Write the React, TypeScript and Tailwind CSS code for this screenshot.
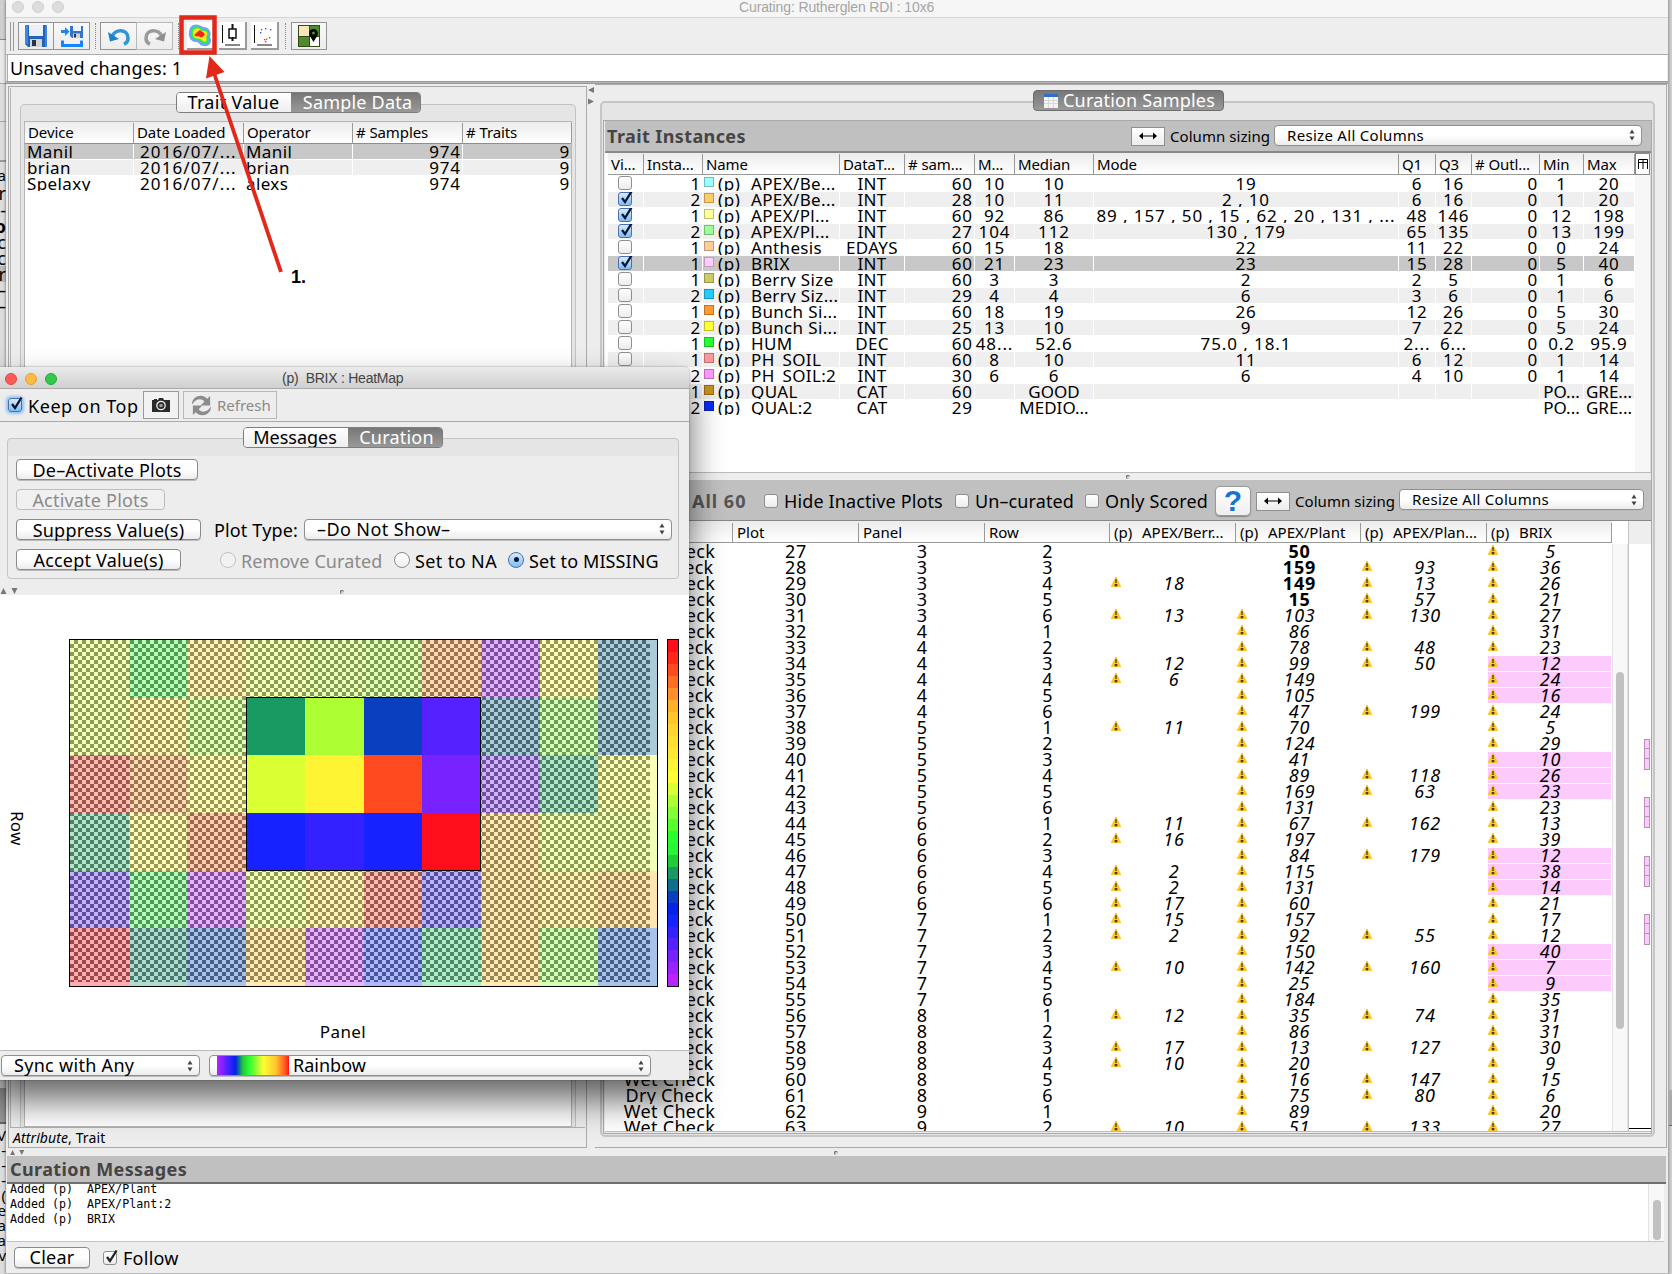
import React from "react";
import { clsx } from "clsx";

/* ---------- small controls ---------- */

function Check({ on, muted, glow }: { on?: boolean; muted?: boolean; glow?: boolean }) {
  return (
    <span
      className={clsx(
        "relative block h-[14px] w-[14px] shrink-0 rounded-[3px] border",
        on && !muted ? "border-[#4a6fae] bg-gradient-to-b from-[#d8ebfb] to-[#7fbdf2]" : "border-[#8f8f8f] bg-gradient-to-b from-white to-[#ececec]",
        glow && "shadow-[0_0_3px_2px_#8fc1ee]"
      )}
    >
      {on && (
        <svg viewBox="0 0 16 16" className="absolute -top-[3px] left-0 h-4 w-4" fill="none" stroke={muted ? "#222" : "#0a1430"} strokeWidth="2.3">
          <path d="M3 8 L6 12 L12.5 1.5" />
        </svg>
      )}
    </span>
  );
}

function Radio({ on, disabled }: { on?: boolean; disabled?: boolean }) {
  return (
    <span
      className={clsx(
        "flex h-4 w-4 shrink-0 items-center justify-center rounded-full border",
        disabled ? "border-[#c0c0c0] bg-[#f2f2f2]" : on ? "border-[#4a6fae] bg-gradient-to-b from-[#d8ebfb] to-[#7fbdf2]" : "border-[#8a8a8a] bg-gradient-to-b from-white to-[#f0f0f0]"
      )}
    >
      {on && <span className="h-[5px] w-[5px] rounded-full bg-[#0a1430]" />}
    </span>
  );
}

function Stepper() {
  return (
    <svg viewBox="0 0 6 12" className="h-3 w-[6px] shrink-0" fill="#444">
      <path d="M3 0.5 L5.5 4.5 H0.5Z M3 11.5 L5.5 7.5 H0.5Z" />
    </svg>
  );
}

function Select({ className, children }: { className: string; children: React.ReactNode }) {
  return (
    <div className={clsx("flex h-[21px] shrink-0 items-center justify-between rounded-[4px] border border-[#8f8f8f] bg-gradient-to-b from-white from-50% to-[#ececec] pr-[6px] leading-[19px] shadow-[0_1px_0_#bbb]", className)}>
      {children}
      <Stepper />
    </div>
  );
}

function Btn({ className, disabled, children }: { className: string; disabled?: boolean; children: React.ReactNode }) {
  return (
    <div
      className={clsx(
        "flex h-[21px] shrink-0 items-center justify-center rounded-[4px] border whitespace-nowrap",
        disabled ? "border-[#bdbdbd] bg-[#f0f0f0] text-[#8a8a8a]" : "border-[#8a8a8a] bg-gradient-to-b from-white from-50% to-[#ececec] shadow-[0_1px_0_#bbb]",
        className
      )}
    >
      {children}
    </div>
  );
}

function ResizeButton({ className }: { className: string }) {
  return (
    <div className={clsx("flex h-[19px] w-[34px] shrink-0 items-center justify-center border border-[#909090] bg-gradient-to-b from-white to-[#ededed]", className)}>
      <svg viewBox="0 0 18 8" className="h-2 w-[18px]" fill="#000">
        <path d="M0 4 L4 0.5 V3.4 H14 V0.5 L18 4 L14 7.5 V4.6 H4 V7.5Z" />
      </svg>
    </div>
  );
}

function Dimple({ className }: { className?: string }) {
  return <span className={clsx("block h-1 w-1 rounded-full border-t border-l border-[#666] bg-[#d8d8d8]", className)} />;
}

function Warn() {
  return (
    <svg viewBox="0 0 10 10" className="h-[10px] w-[10px] shrink-0">
      <path d="M4 0 H6 V1.5 L7 3 L10 9 V10 H0 V9 L3 3 L4 1.500Z" fill="#fdc52e" />
      <path d="M4.500 2h1v4h-1z M4.500 7h1v2.500h-1z M3.500 7.500h3v1h-3z" fill="#111" />
    </svg>
  );
}

/* ---------- toolbar ---------- */

function ToolButton({ className, children }: { className?: string; children: React.ReactNode }) {
  return <div className={clsx("flex h-[28px] items-center justify-center border border-[#939393] bg-gradient-to-b from-[#f8f8f8] to-[#ededed]", className)}>{children}</div>;
}

function FlatTool({ className, children }: { className?: string; children: React.ReactNode }) {
  return <div className={clsx("flex h-[28px] w-[28px] items-center justify-center border-r-2 border-b-2 border-[#9a9a9a] bg-white", className)}>{children}</div>;
}

const Dots = ({ className }: { className: string }) => <div className={clsx("h-[26px] w-0 border-l border-dotted border-[#888]", className)} />;

function Toolbar() {
  return (
    <div className="flex h-[37px] shrink-0 items-center border-b border-[#aaa] bg-[#eeeeee] pl-[4px]">
      <div className="h-[29px] w-[4px] border-x border-[#999]" />
      <ToolButton className="ml-[4px] w-[36px]">
        <svg viewBox="0 0 24 24" className="h-6 w-6">
          <path d="M1 1 H23 V23 H4 L1 20Z" fill="#2461b8" />
          <path d="M1 1 H4 V20 H1Z M21 1 H23 V23 H21Z" fill="#3f86dd" />
          <rect x="5" y="1" width="14" height="11" fill="#e9f0f8" />
          <rect x="6" y="15" width="12" height="8" fill="#d4d4d4" />
          <rect x="8" y="16" width="4" height="6" fill="#26344c" />
        </svg>
      </ToolButton>
      <ToolButton className="-ml-px w-[37px]">
        <svg viewBox="0 0 24 24" className="h-6 w-6">
          <path d="M10 2 H23 V14 H12 L10 12Z" fill="#3176c8" />
          <rect x="13" y="2" width="8" height="5" fill="#eef3fa" />
          <rect x="13" y="9.500" width="7" height="4.500" fill="#d4d4d4" />
          <rect x="14" y="10" width="2" height="3.500" fill="#26344c" />
          <path d="M1 6 H5 V3 L9.500 7.500 L5 12 V9 H1Z" fill="#1c86f2" />
          <path d="M1 16.500 H4 V20 H20 V16.500 H23 V23 H1Z" fill="#1485ff" />
        </svg>
      </ToolButton>
      <Dots className="ml-[5px]" />
      <ToolButton className="ml-[4px] w-[37px]">
        <svg viewBox="0 0 24 24" className="h-6 w-6" fill="none">
          <path d="M5 13 C8 4 21 5 21 14 C21 17 19.500 19 17 20" stroke="#2e96d8" strokeWidth="3.600" />
          <path d="M1 8 L3 17.500 L12 15Z" fill="#1d7fc6" />
        </svg>
      </ToolButton>
      <ToolButton className="-ml-px w-[37px] border-[#b8b8b8]">
        <svg viewBox="0 0 24 24" className="h-6 w-6" fill="none">
          <path d="M19 13 C16 4 3 5 3 14 C3 17 4.500 19 7 20" stroke="#9b9b9b" strokeWidth="3.600" />
          <path d="M23 8 L21 17.500 L12 15Z" fill="#8e8e8e" />
        </svg>
      </ToolButton>
      <Dots className="ml-[5px]" />
      <FlatTool className="ml-[8px]">
        <svg viewBox="0 0 24 24" className="h-6 w-6">
          <defs>
            <filter id="soft" x="-20%" y="-20%" width="140%" height="140%">
              <feGaussianBlur stdDeviation="0.6" />
            </filter>
          </defs>
          <g filter="url(#soft)">
            <path d="M2 5 C5 0 11 1 15 4 C21 4 24 9 22 14 C25 19 21 24 16 23 C11 23 12 19 8 19 C2 19 -1 12 2 5Z" fill="#6aa4ff" />
            <path d="M4 6 C7 2 11 3 14 6 C20 6 22 10 20 14 C22 19 19 22 16 21 C13 20 12 17 9 17 C3 17 2 11 4 6Z" fill="#29e85a" />
            <path d="M5.500 7.500 C8 4 12 5 13.500 8 C19 7 21 11 18 14 C20 18 17 20 15 18 C13 16 11 15.500 9 15.500 C5 15 4 11 5.500 7.500Z" fill="#fbe71e" />
            <path d="M6.500 12 C8 10 10 8 12 7 C14 9 17 9.500 16.500 12 C15 13 14.500 15 12 14 C10 12.500 7 14.500 6.500 12Z" fill="#f5231c" />
          </g>
        </svg>
      </FlatTool>
      <FlatTool className="ml-[4px]">
        <svg viewBox="0 0 24 24" className="h-6 w-6" fill="none" stroke="#111" strokeWidth="1.500">
          <path d="M2.500 2 V20 M5 22 H20" strokeWidth="1" />
          <path d="M12.500 1 V6 M12.500 14 V18" strokeWidth="2" />
          <rect x="9" y="6" width="7" height="9" />
        </svg>
      </FlatTool>
      <FlatTool className="ml-[4px]">
        <svg viewBox="0 0 24 24" className="h-6 w-6">
          <path d="M2.500 2 V20 M5 22 H20" stroke="#111" strokeWidth="1" />
          <g fill="#2040ff">
            <rect x="13" y="5" width="1.300" height="1.300" />
            <rect x="8" y="9" width="1.300" height="1.300" />
            <rect x="18" y="6" width="1.300" height="1.300" />
            <rect x="17" y="14" width="1.300" height="1.300" />
          </g>
          <g fill="#f02020">
            <rect x="9" y="6" width="1.300" height="1.300" />
            <rect x="12" y="16" width="1.300" height="1.300" />
            <rect x="13" y="18" width="1.300" height="1.300" />
            <rect x="14" y="15.500" width="1.300" height="1.300" />
          </g>
        </svg>
      </FlatTool>
      <Dots className="ml-[6px]" />
      <ToolButton className="ml-[5px] w-[36px]">
        <svg viewBox="0 0 22 22" className="h-[22px] w-[22px]">
          <rect width="22" height="22" fill="#2f4a17" />
          <rect x="1" y="1" width="10" height="10" fill="#f8e6b8" />
          <rect x="12" y="1" width="9" height="10" fill="#4f8a2b" />
          <rect x="1" y="12" width="10" height="9" fill="#4f8a2b" />
          <rect x="12" y="12" width="9" height="9" fill="#fff" />
          <path d="M15.500 4 C20 4 21 9 18.500 12 L15.500 17 L12.500 12 C10 9 11 4 15.500 4Z" fill="#000" />
          <circle cx="15.500" cy="8" r="1.600" fill="#4f8a2b" />
        </svg>
      </ToolButton>
    </div>
  );
}

/* ---------- left panel ---------- */

const devices = [
  ["Manil", "2016/07/...", "Manil", "974", "9"],
  ["brian", "2016/07/...", "brian", "974", "9"],
  ["Spelaxy", "2016/07/...", "alexs", "974", "9"],
];

function LeftPanel() {
  return (
    <div className="flex h-[1062px] w-[579px] shrink-0 flex-col border border-[#a9a9a9] p-px">
      <div className="flex min-h-0 flex-1 flex-col border-l border-[#b5b5b5] pt-[4px]">
        <div className="z-10 ml-[165px] flex h-[21px] w-[245px] shrink-0 overflow-hidden rounded-[4px] border border-[#7d7d7d] text-[18px] leading-[19px]">
          <div className="w-[114px] bg-gradient-to-b from-white to-[#eee] pr-px text-center tracking-[0.3px]">Trait Value</div>
          <div className="flex-1 bg-gradient-to-b from-[#777] to-[#999] pl-[4px] text-center tracking-[0.2px] text-white">Sample Data</div>
        </div>
        <div className="-mt-[9px] mr-[9px] ml-[9px] flex-1 rounded-t-[5px] border border-b-0 border-[#c2c2c2] bg-[#e5e5e5] px-[3px] pt-[16px]">
          <div className="h-full border border-[#b5b5b5] bg-white">
            <div className="grid h-[22px] grid-cols-[109px_110px_109px_110px_109px] border-b border-[#8e8e8e] bg-gradient-to-b from-[#ececec] to-white pt-px text-[15px] leading-[19px] tracking-[-0.1px]">
              {["Device", "Date Loaded", "Operator", "# Samples", "# Traits"].map((h) => (
                <div key={h} className="overflow-hidden border-r border-[#999] pl-[3px] whitespace-nowrap">{h}</div>
              ))}
            </div>
            {devices.map((d, i) => (
              <div key={d[0]} className="grid h-4 grid-cols-[109px_110px_109px_110px_109px] text-[17px] leading-[15px] tracking-[0.4px]">
                {d.map((c, j) => (
                  <div
                    key={j}
                    className={clsx(
                      "mr-px h-[15px] overflow-hidden whitespace-nowrap",
                      i === 0 ? "bg-[#c8c8c8]" : i === 1 ? "bg-[#efefef]" : "bg-white",
                      j >= 3 ? "pr-px text-right tracking-[0.9px]" : j === 1 ? "pl-[6px] tracking-[1.1px]" : "pl-[2px]"
                    )}
                  >
                    {c}
                  </div>
                ))}
              </div>
            ))}
          </div>
        </div>
      </div>
      <div className="h-px shrink-0 bg-[#b0b0b0]" />
      <div className="flex h-[18px] shrink-0 items-center pl-[3px] text-[14px] tracking-[0.1px]">
        <i>Attribute</i>, Trait
      </div>
    </div>
  );
}

/* ---------- trait instances ---------- */

const traits = [
  ["", "1", "#99ffff", "APEX/Be...", "INT", "60", "10", "10", "19", "6", "16", "0", "1", "20"],
  ["x", "2", "#ffcc66", "APEX/Be...", "INT", "28", "10", "11", "2 , 10", "6", "16", "0", "1", "20"],
  ["x", "1", "#ffff99", "APEX/Pl...", "INT", "60", "92", "86", "89 , 157 , 50 , 15 , 62 , 20 , 131 , ...", "48", "146", "0", "12", "198"],
  ["x", "2", "#99ff99", "APEX/Pl...", "INT", "27", "104", "112", "130 , 179", "65", "135", "0", "13", "199"],
  ["", "1", "#ffcc99", "Anthesis", "EDAYS", "60", "15", "18", "22", "11", "22", "0", "0", "24"],
  ["x", "1", "#ffccff", "BRIX", "INT", "60", "21", "23", "23", "15", "28", "0", "5", "40"],
  ["", "1", "#cccc66", "Berry Size", "INT", "60", "3", "3", "2", "2", "5", "0", "1", "6"],
  ["", "2", "#22ccff", "Berry Siz...", "INT", "29", "4", "4", "6", "3", "6", "0", "1", "6"],
  ["", "1", "#ff9933", "Bunch Si...", "INT", "60", "18", "19", "26", "12", "26", "0", "5", "30"],
  ["", "2", "#ffff33", "Bunch Si...", "INT", "25", "13", "10", "9", "7", "22", "0", "5", "24"],
  ["", "1", "#22ff33", "HUM", "DEC", "60", "48...", "52.6", "75.0 , 18.1", "2...", "6...", "0", "0.2", "95.9"],
  ["", "1", "#ff9999", "PH_SOIL", "INT", "60", "8", "10", "11", "6", "12", "0", "1", "14"],
  ["", "2", "#ff99ff", "PH_SOIL:2", "INT", "30", "6", "6", "6", "4", "10", "0", "1", "14"],
  ["", "1", "#c8921e", "QUAL", "CAT", "60", "", "GOOD", "", "", "", "", "PO...", "GRE..."],
  ["", "2", "#0a2cf5", "QUAL:2", "CAT", "29", "", "MEDIO...", "", "", "", "", "PO...", "GRE..."],
];

const traitCols = "grid-cols-[36px_59px_137px_65px_70px_40px_79px_305px_37px_36px_68px_44px_51px]";

function TraitInstances() {
  return (
    <>
      <div className="flex h-[32px] shrink-0 items-center border-b-2 border-[#888] bg-[#c0c0c0] pl-[2px]">
        <div className="w-[524px] text-[18px] font-bold tracking-[0.4px] text-[#444]">Trait Instances</div>
        <ResizeButton className="" />
        <div className="ml-[5px] w-[104px] text-[15px] tracking-[0.05px] whitespace-nowrap">Column sizing</div>
        <Select className="mb-[2px] w-[368px] pl-[12px] text-[15px] tracking-[0.3px]">Resize All Columns</Select>
      </div>
      <div className="flex h-[320px] shrink-0 border-b border-[#bbb] bg-white pl-[3px]">
        <div className="w-[1027px] shrink-0">
          <div className={clsx("mb-px grid h-[22px] border-b border-[#999] bg-gradient-to-b from-[#ececec] to-white pt-px text-[15px] leading-[20px]", traitCols)}>
            {["Vi...", "Insta...", "Name", "DataT...", "# sam...", "M...", "Median", "Mode", "Q1", "Q3", "# Outl...", "Min", "Max"].map((h) => (
              <div key={h} className="overflow-hidden border-r border-[#999] pl-[3px] tracking-[-0.1px] whitespace-nowrap">{h}</div>
            ))}
          </div>
          {traits.map((t, i) => (
            <div key={i} className={clsx("grid h-4 text-[17px] leading-[15px]", traitCols)}>
              {[t[0], t[1], t[2], ...t.slice(4)].map((c, j) => (
                <div
                  key={j}
                  className={clsx(
                    "mr-px flex h-[15px] overflow-hidden whitespace-nowrap",
                    i === 5 ? "bg-[#c8c8c8]" : i % 2 ? "bg-[#efefef]" : "bg-white",
                    j === 1 || j === 4 || j === 10 ? "justify-end pr-px tracking-[0.9px]" : j === 2 ? "pl-px" : "justify-center",
                    j > 4 && i < 13 && "tracking-[0.9px]",
                    j === 3 && "tracking-[0.3px]"
                  )}
                >
                  {j === 0 ? (
                    <span className="-ml-px block h-[14px]"><Check on={c === "x"} /></span>
                  ) : j === 2 ? (
                    <>
                      <span className="mt-px block h-[10px] w-[10px] border border-black/25" style={{ backgroundColor: c }} />
                      <span className="ml-[4px] w-[33px] tracking-[0.6px]">(p)</span>
                      <span className="tracking-[0.35px]">{t[3]}</span>
                    </>
                  ) : (
                    c
                  )}
                </div>
              ))}
            </div>
          ))}
        </div>
        <div className="w-4 border-r border-[#ddd] bg-[#f7f7f7]">
          <div className="flex h-[22px] items-center justify-center border border-[#888] bg-white">
            <svg viewBox="0 0 10 10" className="h-[10px] w-[10px]" fill="none" stroke="#000" strokeWidth="1">
              <path d="M0.500 10 V0.500 H9.500 V10 M5 0.500 V10 M0.500 3.500 H9.500" />
            </svg>
          </div>
        </div>
      </div>
    </>
  );
}

/* ---------- plots table ---------- */

type Plot = [string, number, number, number, string, string, string, string];
const plots: Plot[] = [
  ["W", 27, 3, 2, "", "b50", "", "5"],
  ["D", 28, 3, 3, "", "b159", "93", "36"],
  ["W", 29, 3, 4, "18", "b149", "13", "26"],
  ["W", 30, 3, 5, "", "b15", "57", "21"],
  ["W", 31, 3, 6, "13", "103", "130", "27"],
  ["W", 32, 4, 1, "", "86", "", "31"],
  ["D", 33, 4, 2, "", "78", "48", "23"],
  ["W", 34, 4, 3, "12", "99", "50", "p12"],
  ["W", 35, 4, 4, "6", "149", "", "p24"],
  ["D", 36, 4, 5, "", "105", "", "p16"],
  ["W", 37, 4, 6, "", "47", "199", "24"],
  ["D", 38, 5, 1, "11", "70", "", "5"],
  ["W", 39, 5, 2, "", "124", "", "29"],
  ["W", 40, 5, 3, "", "41", "", "p10"],
  ["W", 41, 5, 4, "", "89", "118", "p26"],
  ["D", 42, 5, 5, "", "169", "63", "p23"],
  ["W", 43, 5, 6, "", "131", "", "23"],
  ["W", 44, 6, 1, "11", "67", "162", "13"],
  ["W", 45, 6, 2, "16", "197", "", "39"],
  ["D", 46, 6, 3, "", "84", "179", "p12"],
  ["D", 47, 6, 4, "2", "115", "", "p38"],
  ["W", 48, 6, 5, "2", "131", "", "p14"],
  ["W", 49, 6, 6, "17", "60", "", "21"],
  ["D", 50, 7, 1, "15", "157", "", "17"],
  ["W", 51, 7, 2, "2", "92", "55", "12"],
  ["D", 52, 7, 3, "", "150", "", "p40"],
  ["W", 53, 7, 4, "10", "142", "160", "p7"],
  ["D", 54, 7, 5, "", "25", "", "p9"],
  ["W", 55, 7, 6, "", "184", "", "35"],
  ["D", 56, 8, 1, "12", "35", "74", "31"],
  ["D", 57, 8, 2, "", "86", "", "31"],
  ["D", 58, 8, 3, "17", "13", "127", "30"],
  ["D", 59, 8, 4, "10", "20", "", "9"],
  ["W", 60, 8, 5, "", "16", "147", "15"],
  ["D", 61, 8, 6, "", "75", "80", "6"],
  ["W", 62, 9, 1, "", "89", "", "20"],
  ["W", 63, 9, 2, "10", "51", "133", "27"],
];

const plotCols = "grid-cols-[126px_126px_126px_125px_126px_125px_126px_125px]";

function ValueCell({ v }: { v: string }) {
  const bold = v.startsWith("b");
  const pink = v.startsWith("p");
  return (
    <div className={clsx("mr-px ml-px flex h-[15px] items-start overflow-hidden", pink && "bg-[#fccbfc]")}>
      {v && (
        <>
          <span className="block w-[10px] pt-px">{!bold && <Warn />}</span>
          <span className={clsx("-ml-[8px] flex-1 text-center tracking-[0.8px]", bold ? "font-bold" : "italic")}>{v.replace(/^[bp]/, "")}</span>
        </>
      )}
    </div>
  );
}

const groups = ["mt-[195px]", "mt-[27px]", "mt-[28px]", "mt-[27px]"];

function PlotsTable() {
  return (
    <>
      <div className="flex h-[41px] shrink-0 items-center border-b border-[#888] bg-[#c0c0c0] pt-[2px] pl-[87px] text-[18px] whitespace-nowrap">
        <div className="w-[72px] font-bold tracking-[1px] text-[#555]">All 60</div>
        <Check />
        <div className="ml-[6px] w-[171px] tracking-[0.12px]">Hide Inactive Plots</div>
        <Check />
        <div className="ml-[6px] w-[110px] tracking-[0.1px]">Un–curated</div>
        <Check />
        <div className="ml-[6px] w-[110px] tracking-[0.15px]">Only Scored</div>
        <div className="flex h-[30px] w-[36px] items-center justify-center rounded-[5px] border border-[#999] bg-gradient-to-b from-white to-[#eee] font-['Liberation_Sans'] text-[30px] leading-none font-bold text-[#1374d6] shadow-[0_1px_1px_#888]">?</div>
        <ResizeButton className="ml-[5px]" />
        <div className="ml-[5px] w-[104px] text-[15px] tracking-[0.05px]">Column sizing</div>
        <Select className="mb-[3px] w-[245px] pl-[12px] text-[15px] tracking-[0.3px]">Resize All Columns</Select>
      </div>
      <div className="flex h-[611px] shrink-0 overflow-hidden border-b border-[#bbb] bg-white pl-[2px]">
        <div className="w-[1005px] shrink-0">
          <div className={clsx("mb-px grid h-[22px] border-b border-[#999] bg-gradient-to-b from-[#ececec] to-white pt-[2px] text-[15px] leading-[19px]", plotCols)}>
            {["Entry Type", "Plot", "Panel", "Row", "APEX/Berr...", "APEX/Plant", "APEX/Plan...", "BRIX"].map((h, i) => (
              <div key={h} className="flex overflow-hidden border-r border-[#999] pl-[4px] whitespace-nowrap">
                {i > 3 && <span className="w-[28px] shrink-0">(p)</span>}
                {h}
              </div>
            ))}
          </div>
          {plots.map((p) => (
            <div key={p[1]} className={clsx("grid h-4 overflow-hidden text-[18px] leading-[15px]", plotCols)}>
              <div className="pr-px text-center tracking-[0.3px]">{p[0] === "W" ? "Wet Check" : "Dry Check"}</div>
              <div className="text-center tracking-[0.7px]">{p[1]}</div>
              <div className="text-center">{p[2]}</div>
              <div className="text-center">{p[3]}</div>
              <ValueCell v={p[4]} />
              <ValueCell v={p[5]} />
              <ValueCell v={p[6]} />
              <ValueCell v={p[7]} />
            </div>
          ))}
        </div>
        <div className="mt-[23px] flex w-[16px] shrink-0 flex-col items-center border-x border-[#e2e2e2] bg-[#f8f8f8] pt-[128px]">
          <div className="h-[357px] w-[8px] rounded-full bg-[#c1c1c1]" />
        </div>
        <div className="flex w-[25px] shrink-0 flex-col border-l border-[#c5c5c5]">
          <div className="h-[23px] shrink-0 bg-[#eeeeee]" />
          <div className="flex h-[585px] shrink-0 flex-col items-end border-b border-black pr-[3px]">
            {groups.map((g, i) => (
              <div key={i} className={clsx("flex w-[6px] flex-col border border-[#b78fb7]", g)}>
                <div className="h-[9px] border-b border-[#b78fb7] bg-[#fccbfc]" />
                <div className="h-[10px] border-b border-[#b78fb7] bg-[#fccbfc]" />
                <div className="h-[10px] bg-[#fccbfc]" />
              </div>
            ))}
          </div>
        </div>
      </div>
    </>
  );
}

function RightPanel() {
  return (
    <div className="flex h-[1064px] w-[1072px] shrink-0 flex-col border-t border-r border-b border-[#a9a9a9] pt-[5px]">
      <div className="z-10 ml-[438px] flex h-[21px] w-[191px] shrink-0 items-center rounded-[4px] border border-[#6d6d6d] bg-gradient-to-b from-[#777] to-[#999] pl-[10px] text-[18px] tracking-[0.2px] whitespace-nowrap text-white">
        <svg viewBox="0 0 14 14" className="mr-[5px] h-[14px] w-[14px] shrink-0">
          <rect width="14" height="14" fill="#f3f3f3" />
          <rect width="14" height="3" fill="#2c6fc4" />
          <path d="M0 6.500H14M0 9.500H14M4.500 3V14M9.500 3V14" stroke="#d8d8d8" />
        </svg>
        Curation Samples
      </div>
      <div className="-mt-[10px] ml-[5px] h-[1036px] w-[1055px] rounded-[5px] border-2 border-[#c6c6c6] bg-[#e5e5e5] px-px pt-[17px]">
        <div className="flex h-[1014px] flex-col border border-[#a9a9a9] bg-[#eee] pl-px">
          <TraitInstances />
          <div className="flex h-[7px] shrink-0 items-center justify-center"><Dimple /></div>
          <PlotsTable />
        </div>
      </div>
    </div>
  );
}

/* ---------- heat map window ---------- */

const heat = [
  ["#daff33", "#2aff2e", "#ffde30", "#daff33", "#c0ff33", "#adff33", "#ff8f28", "#aa22ff", "#fff433", "#0f6e90"],
  ["#daff33", "#ffe832", "#adff33", "#189a62", "#adff33", "#0a3fc0", "#5522ff", "#0f6e90", "#80ff33", "#0f6e90"],
  ["#ff3a1f", "#ff8f28", "#fff433", "#daff33", "#fff433", "#ff4a1f", "#7722ff", "#7722ff", "#20b868", "#edff33"],
  ["#20b868", "#fff433", "#ff6e22", "#1622ff", "#3322ff", "#1622ff", "#ff0d1a", "#ffc42e", "#daff33", "#daff33"],
  ["#5522ff", "#28f538", "#bb22ff", "#daff33", "#ffde30", "#ff3a1f", "#3322ff", "#ffc42e", "#ffde30", "#ffb82b"],
  ["#ff0d1a", "#189a78", "#0a4fc0", "#ffc42e", "#bb22ff", "#1633ff", "#20c868", "#ffc42e", "#80ff33", "#0a4fc0"],
];

const scale = [
  "#ff0d1a", "#ff261a", "#ff4a1f", "#ff6e22", "#ff8f28", "#ffb02b", "#ffc42e", "#ffd42f", "#ffde30", "#ffe832",
  "#fff433", "#fdff33", "#daff33", "#adff33", "#80ff33", "#55ff2e", "#2aff2e", "#28f538", "#20cc38", "#189a62",
  "#0f6e90", "#0a3fc0", "#0522e8", "#1622ff", "#3322ff", "#5522ff", "#7722ff", "#9a22ff", "#bb22ff",
];

function HeatMap() {
  return (
    <div className="flex h-[455px] shrink-0 flex-col bg-white pt-[44px]">
      <div className="flex h-[348px]">
        <div className="flex w-[69px] items-center pl-[7px]">
          <span className="mt-[30px] text-[17px] leading-[20px] tracking-[0.2px] [writing-mode:vertical-rl]">Row</span>
        </div>
        <div className="relative h-[348px] w-[589px] border border-black bg-white">
          <div className="h-[342px] w-[580px] bg-[repeating-conic-gradient(#666666_0_25%,#ffffff_0_50%)] bg-[length:8px_8px]" />
          <div className="absolute inset-0 grid grid-cols-10 grid-rows-6">
            {heat.flatMap((r, y) =>
              r.map((c, x) => (
                <div key={`${x}-${y}`} className={y > 0 && y < 4 && x > 2 && x < 7 ? "" : "opacity-35"} style={{ backgroundColor: c }} />
              ))
            )}
          </div>
          <div className="absolute top-[57px] left-[176px] h-[174px] w-[235px] border border-black" />
        </div>
        <div className="ml-[9px] flex w-[12px] flex-col border border-black">
          {scale.map((c) => (
            <div key={c} className="flex-1" style={{ backgroundColor: c }} />
          ))}
        </div>
      </div>
      <div className="mt-[32px] pr-[3px] text-center text-[17px] leading-[26px] tracking-[0.4px]">Panel</div>
    </div>
  );
}

function HeatMapWindow() {
  return (
    <div className="absolute top-[367px] left-[-6px] z-20 flex h-[713px] w-[695px] flex-col overflow-visible rounded-t-[5px] bg-[#ededed] pl-[6px] shadow-[0_20px_34px_rgba(0,0,0,0.6),0_0_2px_rgba(0,0,0,0.45)]">
      <div className="-ml-[6px] flex h-[22px] shrink-0 items-center rounded-t-[5px] border-b border-[#aaa] bg-gradient-to-b from-[#ebebeb] to-[#d0d0d0] pt-[2px] pl-[11px]">
        <span className="h-3 w-3 rounded-full border border-[#df4744] bg-[#fc5b57]" />
        <span className="ml-2 h-3 w-3 rounded-full border border-[#dea034] bg-[#fdbc40]" />
        <span className="ml-2 h-3 w-3 rounded-full border border-[#27aa35] bg-[#34c84a]" />
        <span className="ml-[225px] font-['Liberation_Sans'] text-[14px] tracking-[-0.25px] whitespace-pre text-[#444]">(p)  BRIX : HeatMap</span>
      </div>
      <div className="flex h-[33px] shrink-0 items-center border-b border-[#aaa] pl-[8px]">
        <Check on glow />
        <span className="mt-[2px] ml-[6px] w-[115px] text-[18px] tracking-[0.55px] whitespace-nowrap">Keep on Top</span>
        <div className="flex h-[28px] w-[36px] items-center justify-center border border-[#999] bg-[#f2f2f2]">
          <svg viewBox="0 0 18 14" className="h-[14px] w-[18px]">
            <path d="M0 2 H2 V1 H5 V2 H6 L7 0 H11 L12 2 H18 V14 H0Z" fill="#2b2b2b" />
            <circle cx="9" cy="7.500" r="4.200" fill="none" stroke="#eee" strokeWidth="1.300" />
            <circle cx="9" cy="7.500" r="1.800" fill="#999" />
          </svg>
        </div>
        <div className="ml-[4px] flex h-[28px] w-[94px] items-center border border-[#b8b8b8] pl-[6px] text-[15px] text-[#8a8a8a]">
          <svg viewBox="0 0 24 24" className="mr-[4px] h-[23px] w-[23px] shrink-0" fill="#8c8c8c">
            <path d="M2 11 C2 2 13 -1 18 5 L21 2 V12 H11 L15 8 C12 4 6 5 2 11Z" />
            <path d="M22 13 C22 22 11 25 6 19 L3 22 V12 H13 L9 16 C12 20 18 19 22 13Z" />
          </svg>
          Refresh
        </div>
      </div>
      <div className="z-10 mt-[5px] ml-[243px] flex h-[21px] w-[200px] shrink-0 overflow-hidden rounded-[4px] border border-[#7d7d7d] text-[18px] leading-[19px]">
        <div className="w-[104px] bg-gradient-to-b from-white to-[#eee] pr-[2px] text-center">Messages</div>
        <div className="flex-1 bg-gradient-to-b from-[#777] to-[#999] pl-[3px] text-center tracking-[0.2px] text-white">Curation</div>
      </div>
      <div className="-mt-[10px] ml-[7px] h-[141px] w-[672px] shrink-0 rounded-[4px] border border-[#c4c4c4] bg-[linear-gradient(#e5e5e5_17px,#ededed_17px)] pt-[20px] pl-[8px] text-[18px] leading-[20px] tracking-[0.2px] whitespace-nowrap">
        <Btn className="w-[182px]">De–Activate Plots</Btn>
        <Btn className="mt-[9px] w-[149px]" disabled>Activate Plots</Btn>
        <div className="mt-[9px] flex h-[21px] items-center">
          <Btn className="w-[185px]">Suppress Value(s)</Btn>
          <span className="ml-[13px] w-[90px] tracking-[0.15px]">Plot Type:</span>
          <Select className="mb-px w-[368px] pl-[12px] tracking-[0.4px]">–Do Not Show–</Select>
        </div>
        <div className="mt-[9px] flex h-[21px] items-center tracking-[0.1px]">
          <Btn className="w-[165px] tracking-[0.2px]">Accept Value(s)</Btn>
          <span className="w-[39px]" />
          <Radio disabled />
          <span className="mt-[2px] ml-[5px] w-[153px] text-[#8a8a8a]">Remove Curated</span>
          <Radio />
          <span className="mt-[2px] ml-[5px] w-[93px] tracking-[0.4px]">Set to NA</span>
          <Radio on />
          <span className="mt-[2px] ml-[5px]">Set to MISSING</span>
        </div>
      </div>
      <div className="flex h-[16px] shrink-0 items-end pb-px text-[#777]">
        <svg viewBox="0 0 20 6" className="h-[6px] w-5 shrink-0" fill="#777"><path d="M3.500 0 L6.500 6 H0.500Z M14.500 6 L17.500 0 H11.500Z" /></svg>
        <Dimple className="ml-[320px]" />
      </div>
      <HeatMap />
      <div className="flex flex-1 items-center border-t border-[#bbb] pl-px text-[18px]">
        <Select className="w-[199px] pl-[12px] tracking-[0.3px]">Sync with Any</Select>
        <Select className="ml-[9px] w-[442px] pl-[7px]">
          <span className="mr-[4px] block h-[19px] w-[72px] bg-[linear-gradient(90deg,#bb22ff,#3322ff_18%,#0522e8_26%,#20cc38_36%,#33ff33_46%,#fdff33_64%,#ffc42e_82%,#ff4a1f_96%,#ff0d1a)]" />
          <span className="flex-1">Rainbow</span>
        </Select>
      </div>
    </div>
  );
}

/* ---------- page ---------- */

function BehindLeft() {
  return (
    <div className="flex h-full w-[6px] shrink-0 flex-col items-end overflow-hidden bg-[#dcdcdc] text-[18px] leading-4 text-black">
      <div className="h-[40px] w-full border-b border-[#888] bg-[#cfcfcf]" />
      <div className="h-[44px] w-full border-b border-[#aaa] bg-[#e8e8e8]" />
      <div className="h-[38px] w-full border-b border-[#aaa]" />
      <div className="h-[40px] w-full border-b-2 border-[#999]" />
      <div className="mt-[5px] h-[18px] text-[15px]">a</div>
      <div>r</div>
      <div className="mt-px">-</div>
      <div className="font-bold">o</div>
      <div>c</div>
      <div>c</div>
      <div className="flex w-full justify-end bg-[#bbb]">r</div>
      <div>–</div>
      <div>–</div>
      <div className="mt-[774px] h-[36px] w-full border-b-2 border-[#666] bg-[#999]" />
      <div className="flex flex-col items-end pt-1 text-[15px] leading-[15px]">
        <span>V</span>
        <span>-</span>
        <span>-</span>
        <span>-</span>
        <span>(</span>
        <span>e</span>
        <span>ta</span>
        <span>ca</span>
        <span>-v</span>
      </div>
    </div>
  );
}

export default function App() {
  return (
    <div className="relative flex h-[1274px] w-[1672px] overflow-hidden bg-[#d0d0d0] font-['Noto_Sans',sans-serif] text-black">
      <BehindLeft />
      <div className="flex w-[1662px] shrink-0 flex-col bg-[#ededed] shadow-[0_0_3px_rgba(0,0,0,0.6)]">
        <div className="flex h-[18px] shrink-0 items-center border-b border-[#d5d5d5] bg-[#f6f6f6] pl-[6px]">
          <span className="mb-[3px] h-3 w-3 rounded-full border border-[#d0d0d0] bg-[#dddddd]" />
          <span className="mb-[3px] ml-2 h-3 w-3 rounded-full border border-[#d0d0d0] bg-[#dddddd]" />
          <span className="mb-[3px] ml-2 h-3 w-3 rounded-full border border-[#d0d0d0] bg-[#dddddd]" />
          <span className="mb-[2px] ml-[675px] font-['Liberation_Sans'] text-[14px] tracking-[-0.13px] whitespace-nowrap text-[#a5a5a5]">Curating: Rutherglen RDI : 10x6</span>
        </div>
        <Toolbar />
        <div className="mx-px flex h-[26px] shrink-0 items-center border-l border-[#aaa] bg-white pl-[2px] text-[18px] tracking-[0.2px]">Unsaved changes: 1</div>
        <div className="h-[3px] shrink-0 border-y border-[#999] bg-[#b5b5b5]" />
        <div className="flex h-[1065px] shrink-0 pl-[2px]">
          <div className="pt-[2px]"><LeftPanel /></div>
          <div className="flex w-[8px] shrink-0 flex-col items-center pt-[3px]">
            <svg viewBox="0 0 6 18" className="h-[18px] w-[6px]" fill="#777"><path d="M6 0 V6 L0 3Z M0 11.500 V17.500 L6 14.500Z" /></svg>
          </div>
          <RightPanel />
        </div>
        <div className="flex h-[7px] shrink-0 items-center pl-[2px]">
          <svg viewBox="0 0 20 6" className="h-[5px] w-5 shrink-0" fill="#777"><path d="M3.500 0 L6.500 6 H0.500Z M14.500 6 L17.500 0 H11.500Z" /></svg>
          <Dimple className="ml-[806px]" />
        </div>
        <div className="mr-[2px] ml-px flex h-[28px] shrink-0 items-center border-b-2 border-[#6e6e6e] bg-[#c0c0c0] pl-[3px] text-[18px] font-bold tracking-[0.4px] text-[#444]">Curation Messages</div>
        <div className="mr-[4px] ml-px flex h-[58px] shrink-0 justify-between overflow-hidden border-b border-[#c4c4c4] bg-white">
          <pre className="-mt-[2px] pl-[3px] font-['DejaVu_Sans_Mono'] text-[11.650px] leading-[15px]">{"Added (p)  APEX/Plant\nAdded (p)  APEX/Plant:2\nAdded (p)  BRIX"}</pre>
          <div className="flex w-[16px] justify-center border-l border-[#e2e2e2] bg-[#f8f8f8] pt-[16px]">
            <div className="h-[40px] w-[8px] rounded-full bg-[#c1c1c1]" />
          </div>
        </div>
        <div className="flex flex-1 items-center border-b border-[#bbb] pl-[8px] text-[18px] tracking-[0.25px]">
          <Btn className="w-[76px]">Clear</Btn>
          <span className="w-[13px]" />
          <Check on muted />
          <span className="mt-[2px] ml-[6px]">Follow</span>
        </div>
      </div>
      <div className="flex w-[4px] flex-col overflow-hidden border-l border-[#a8a8a8]">
        <div className="mt-[1090px] h-[36px] border-b border-[#666] bg-[#aaa]" />
      </div>

      <HeatMapWindow />

      <svg className="pointer-events-none absolute top-0 left-0 z-30 h-[300px] w-[340px]" viewBox="0 0 340 300">
        <rect x="181.500" y="17.500" width="33" height="35" fill="none" stroke="#e1281a" strokeWidth="4.500" />
        <path d="M281 272 L213 70" stroke="#e1281a" strokeWidth="3.800" />
        <path d="M209.500 56 L224.500 72 L206 78.500Z" fill="#e1281a" />
      </svg>
      <span className="absolute top-[267px] left-[291px] z-30 font-['Liberation_Sans'] text-[18px] leading-[20px] font-bold">1.</span>
    </div>
  );
}
